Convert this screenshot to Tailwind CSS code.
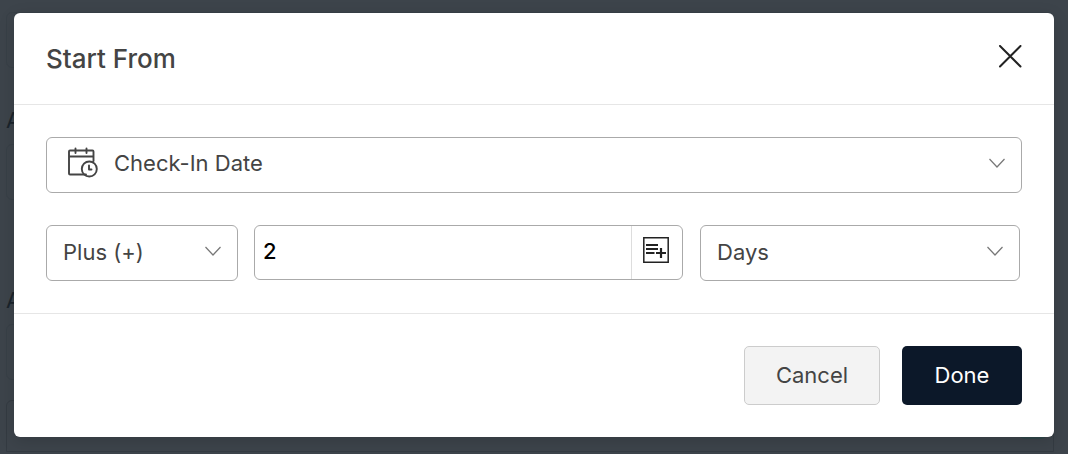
<!DOCTYPE html>
<html lang="en">

<head>
    <meta charset="UTF-8">
    <meta name="viewport" content="width=device-width, initial-scale=1.0">
    <title>Start From</title>
    <script src="https://cdn.jsdelivr.net/npm/@tailwindcss/browser@4"></script>
</head>

<body class="relative min-h-screen bg-[#3d444b] font-['Inter','Liberation_Sans',sans-serif] text-[22px] text-[#444]">
    <!-- Dimmed form behind the dialog -->
    <div class="absolute inset-0 overflow-hidden pt-3 pr-3.5 pl-1.5 text-[#1b242c]" aria-hidden="true">
        <div class="h-14 rounded-md border border-[#384047]"></div>
        <p class="mt-9 h-8 leading-8">A</p>
        <div class="mt-2 h-14 rounded-md border border-[#384047]"></div>
        <p class="mt-21 h-8 leading-8">A</p>
        <div class="mt-2 h-14 rounded-md border border-[#384047]"></div>
        <div class="mt-5 flex h-13 justify-end rounded-t-md border border-[#343b42] px-1.5">
            <div class="mt-1.5 h-8 w-7 rounded-md bg-[#304649]"></div>
        </div>
    </div>

    <!-- Dialog -->
    <div class="relative px-3.5 pt-[13px]">
        <section role="dialog" aria-labelledby="dialogTitle" class="rounded-md bg-white shadow-[0_4px_16px_rgba(0,0,0,0.15)]">
            <header class="flex h-23 items-center justify-between border-b border-[#e6e6e6] px-8">
                <h2 id="dialogTitle" class="text-[26px] leading-8 font-medium">Start From</h2>
                <button type="button" aria-label="Close" class="pb-1">
                    <svg class="size-6" viewBox="0 0 24 24" fill="none" stroke="#222" stroke-width="2" stroke-linecap="round">
                        <path d="M2 1 22.500 21.500M22.500 1 2 21.500" />
                    </svg>
                </button>
            </header>

            <div class="space-y-8 p-8">
                <div class="relative">
                    <svg class="pointer-events-none absolute top-2.5 left-5 h-8 w-8" viewBox="0 0 32 32" fill="none" stroke="#444" stroke-width="1.9" stroke-linecap="round" stroke-linejoin="round">
                        <path d="M20 27.500H4a1 1 0 0 1-1-1V4.500a1 1 0 0 1 1-1h22.500a1 1 0 0 1 1 1v9.500M3 9.500H27.500M9.500 1.500v4.500M20.500 1.500v4.500" />
                        <circle cx="23.300" cy="22" r="7.500" />
                        <path d="M23 18.500v4h2.500" />
                    </svg>
                    <select aria-label="Start date field" class="h-14 w-full appearance-none rounded-md border border-[#aaa] bg-white pr-12 pb-1 pl-[67px]">
                        <option>Check-In Date</option>
                    </select>
                    <svg class="pointer-events-none absolute top-5 right-4 h-3 w-4.5" viewBox="0 0 18 12" fill="none" stroke="#777" stroke-width="1.200">
                        <path d="m1.500 2 7.500 8 7.500-8" />
                    </svg>
                </div>

                <div class="mr-0.5 flex items-start">
                    <div class="relative w-48">
                        <select aria-label="Operator" class="h-14 w-full appearance-none rounded-md border border-[#aaa] bg-white pr-10 pb-0.5 pl-4">
                            <option>Plus (+)</option>
                        </select>
                        <svg class="pointer-events-none absolute top-5 right-4 h-3 w-4.5" viewBox="0 0 18 12" fill="none" stroke="#777" stroke-width="1.200">
                            <path d="m1.500 2 7.500 8 7.500-8" />
                        </svg>
                    </div>

                    <div class="ml-4 flex h-[55px] min-w-0 flex-1 rounded-md border border-[#aaa]">
                        <input type="text" value="2" aria-label="Amount" class="min-w-0 flex-1 rounded-l-md pb-0.5 pl-2 text-[22px] font-medium text-black">
                        <button type="button" aria-label="Insert field" class="flex w-[51px] items-center justify-center border-l border-[#ddd] pr-0.5 pb-1.5">
                            <svg class="size-[26px]" viewBox="0 0 26 26" fill="none" stroke="#222">
                                <path stroke-width="1.500" d="M.8.8h24.400v24.400H.8z" />
                                <path stroke-width="2.200" d="M3 8h12M3 12h12M3 16h8.500M13 16h10M18 11v10" />
                            </svg>
                        </button>
                    </div>

                    <div class="relative ml-[17px] w-80">
                        <select aria-label="Unit" class="h-14 w-full appearance-none rounded-md border border-[#aaa] bg-white pr-10 pb-0.5 pl-4">
                            <option>Days</option>
                        </select>
                        <svg class="pointer-events-none absolute top-5 right-4 h-3 w-4.5" viewBox="0 0 18 12" fill="none" stroke="#777" stroke-width="1.200">
                            <path d="m1.500 2 7.500 8 7.500-8" />
                        </svg>
                    </div>
                </div>
            </div>

            <footer class="flex justify-end gap-[22px] border-t border-[#e6e6e6] p-8">
                <button type="button" class="h-[59px] w-34 rounded-[5px] border border-[#ccc] bg-[#f3f3f3]">Cancel</button>
                <button type="button" class="h-[59px] w-30 rounded-[5px] bg-[#0c1829] text-white">Done</button>
            </footer>
        </section>
    </div>
</body>

</html>
